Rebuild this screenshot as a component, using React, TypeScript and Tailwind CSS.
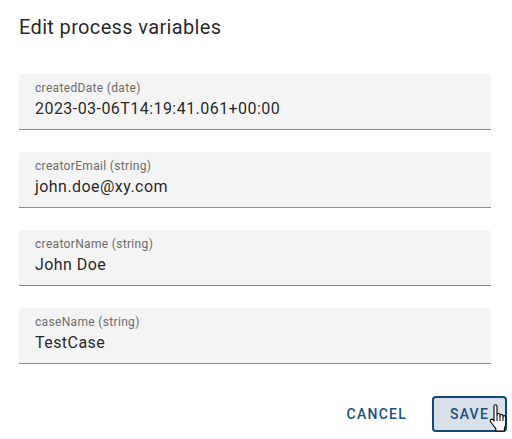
import React from "react";

const fields = [
  { label: "createdDate (date)", value: "2023-03-06T14:19:41.061+00:00" },
  { label: "creatorEmail (string)", value: "john.doe@xy.com" },
  { label: "creatorName (string)", value: "John Doe" },
  { label: "caseName (string)", value: "TestCase" },
];

function Hand() {
  return (
    <svg width="18" height="30" viewBox="0 0 18 30" className="absolute left-[489px] top-[404px]">
      <path
        d="M5 2.5c0-1 .7-1.7 1.5-1.7S8 1.5 8 2.5V11c0-.9.7-1.5 1.5-1.5S11 10.1 11 11v1c0-.9.7-1.5 1.5-1.5S14 11.1 14 12v1c0-.9.6-1.4 1.300-1.4.8 0 1.4.6 1.4 1.4v6.5c0 2-.5 3.5-1.3 4.8V27H6.8v-2.4C5.5 23 3.5 20.5 1.6 17.8c-.6-.8-.4-1.8.3-2.3.7-.5 1.6-.3 2.2.4L5 17V2.5z"
        fill="#fff"
        stroke="#000"
        strokeWidth="1.1"
        strokeLinejoin="round"
      />
      <path d="M8 11v6M11 12v5M14 13v4" stroke="#000" strokeWidth="1" />
    </svg>
  );
}

export default function App() {
  return (
    <div
      className="relative w-[512px] h-[439px] bg-white overflow-hidden"
      style={{ fontFamily: "Roboto, 'Liberation Sans', sans-serif" }}
    >
      <div className="pl-[19px] pr-[21px] pt-[13px]">
        <h2 className="text-[20px] leading-[28px] text-[rgba(0,0,0,0.87)] font-normal tracking-[0.35px]">
          Edit process variables
        </h2>
        <div className="mt-[33px] flex flex-col gap-[22px]">
          {fields.map((f) => (
            <div
              key={f.label}
              className="h-[56px] bg-[#f4f4f4] rounded-t-[4px] border-b border-[#8c8c8c] px-[16px] pt-[7px]"
            >
              <div className="text-[12px] leading-[14px] text-[#6b6b6b] tracking-[0.33px]">{f.label}</div>
              <div className="text-[16px] leading-[24px] mt-[2px] text-[rgba(0,0,0,0.87)] tracking-[0.45px]">
                {f.value}
              </div>
            </div>
          ))}
        </div>
        <div className="mt-[32px] flex justify-end items-center gap-[17px] mr-[-16px]">
          <button className="h-[36px] px-[8px] text-[14px] font-medium tracking-[1.25px] text-[#1b4f7c]">
            CANCEL
          </button>
          <button className="h-[36px] w-[75px] rounded-[4px] border-2 border-[#134a74] bg-[#d8e0e9] text-[14px] font-medium tracking-[1.25px] text-[#1b4f7c]">
            SAVE
          </button>
        </div>
      </div>
      <Hand />
    </div>
  );
}
